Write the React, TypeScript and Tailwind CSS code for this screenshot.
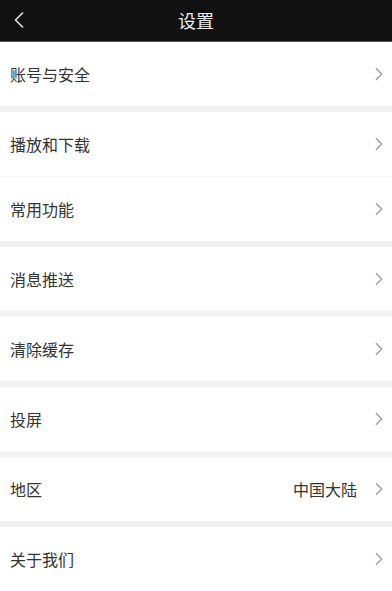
import { ChevronLeft, ChevronRight } from 'lucide-react';

type Item = { label: string; value?: string };

// groups separated by grey bands, items within a group by hairlines
const groups: Item[][] = [
  [{ label: '账号与安全' }],
  [{ label: '播放和下载' }, { label: '常用功能' }],
  [{ label: '消息推送' }],
  [{ label: '清除缓存' }],
  [{ label: '投屏' }],
  [{ label: '地区', value: '中国大陆' }],
  [{ label: '关于我们' }],
];

function Row({ item }: { item: Item }) {
  return (
    <div className="flex h-[64px] items-center bg-white pl-[10px] pr-[2px]">
      <span className="flex-1 text-[16px] text-[#333]">{item.label}</span>
      {item.value && <span className="mr-[11px] text-[16px] text-[#333]">{item.value}</span>}
      <ChevronRight className="h-[22px] w-[22px] text-[#999]" strokeWidth={1.3} />
    </div>
  );
}

export default function App() {
  return (
    <div
      className="flex h-[591px] w-[392px] flex-col overflow-hidden bg-white"
      style={{ fontFamily: '"Noto Sans CJK SC", "Noto Sans", sans-serif' }}
    >
      {/* Header */}
      <div className="relative flex h-[42px] shrink-0 items-center justify-center border-b border-[#555] bg-[#111]">
        <ChevronLeft className="absolute left-[5px] top-[6px] h-[28px] w-[28px] text-[#ddd]" strokeWidth={1.5} />
        <span className="text-[18px] text-[#eee]">设置</span>
      </div>

      {groups.map((group, gi) => (
        <div key={gi} className={gi > 0 ? 'border-t-[6px] border-[#f2f2f2]' : ''}>
          {group.map((item, ii) => (
            <div key={item.label} className={ii > 0 ? 'border-t border-[#f4f4f4]' : ''}>
              <Row item={item} />
            </div>
          ))}
        </div>
      ))}
    </div>
  );
}
